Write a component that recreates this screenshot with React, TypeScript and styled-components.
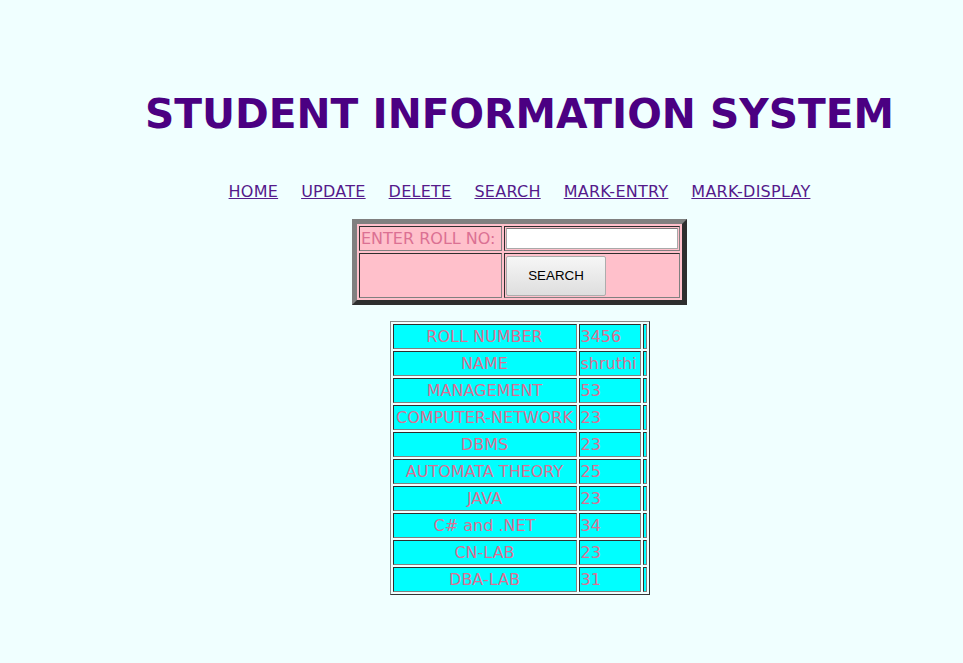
import React from "react";
import styled, { createGlobalStyle } from "styled-components";

const Global = createGlobalStyle`
  html, body { margin: 0; padding: 0; background: #f0ffff; }
  body { font-family: "DejaVu Sans", Verdana, sans-serif; }
`;

const Page = styled.div`
  padding: 91px 8px 40px 84px;
  display: flex;
  flex-direction: column;
  align-items: center;
`;

const Title = styled.h1`
  margin: 0;
  font-family: "DejaVu Sans", Verdana, sans-serif;
  font-weight: bold;
  font-size: 40.7px;
  line-height: 46px;
  color: #4b0082;
  text-align: center;
`;

const Nav = styled.nav`
  margin-top: 45px;
  display: flex;
  gap: 23px;
  font-size: 16px;
  line-height: 19px;
  letter-spacing: 0.25px;
`;

const NavLink = styled.a`
  color: #551a8b;
  text-decoration: underline;
`;

const FormTable = styled.table`
  margin-top: 18px;
  background: #ffc0cb;
  border-collapse: separate;
  border-spacing: 2px;
  border-style: solid;
  border-width: 5px;
  border-color: #808080 #2e2e2e #2e2e2e #808080;
`;

const DataTable = styled.table`
  margin-top: 16px;
  border-collapse: separate;
  border-spacing: 2px;
  border-style: solid;
  border-width: 1px;
  border-color: #8a8a8a #333 #333 #8a8a8a;
`;

const Cell = styled.td<{ $align?: string; $h?: number; $w?: number }>`
  border-style: solid;
  border-width: 1px;
  border-color: #2e2e2e #808080 #808080 #2e2e2e;
  padding: 1px;
  font-size: 16px;
  line-height: 21px;
  color: #db7093;
  text-align: ${(p) => p.$align || "left"};
  vertical-align: middle;
  white-space: nowrap;
  height: ${(p) => (p.$h ? `${p.$h}px` : "auto")};
  width: ${(p) => (p.$w !== undefined ? `${p.$w}px` : "auto")};
`;

const DataCell = styled(Cell)`
  background: #00ffff;
`;

const RollInput = styled.input`
  box-sizing: border-box;
  display: block;
  width: 172px;
  height: 21px;
  margin: 0;
  padding: 1px 2px;
  background: #fff;
  border: 1px solid #a9a9a9;
  border-top-color: #7a7a7a;
  font-size: 13px;
`;

const SearchButton = styled.button`
  box-sizing: border-box;
  display: block;
  width: 100px;
  height: 40px;
  margin: 0;
  background: linear-gradient(#f6f6f6, #dedede);
  border: 1px solid #adadad;
  border-radius: 2px;
  font-family: "Liberation Sans", Arial, sans-serif;
  font-size: 13.33px;
  color: #000;
`;

const rows: [string, string][] = [
  ["ROLL NUMBER", "3456"],
  ["NAME", "shruthi"],
  ["MANAGEMENT", "53"],
  ["COMPUTER-NETWORK", "23"],
  ["DBMS", "23"],
  ["AUTOMATA THEORY", "25"],
  ["JAVA", "23"],
  ["C# and .NET", "34"],
  ["CN-LAB", "23"],
  ["DBA-LAB", "31"],
];

const links = ["HOME", "UPDATE", "DELETE", "SEARCH", "MARK-ENTRY", "MARK-DISPLAY"];

export default function App() {
  return (
    <>
      <Global />
      <Page>
        <Title>STUDENT INFORMATION SYSTEM</Title>
        <Nav>
          {links.map((l) => (
            <NavLink key={l} href="#">
              {l}
            </NavLink>
          ))}
        </Nav>
        <FormTable>
          <tbody>
            <tr>
              <Cell $w={139}>ENTER ROLL NO:</Cell>
              <Cell $w={172}>
                <RollInput type="text" />
              </Cell>
            </tr>
            <tr>
              <Cell $h={41}></Cell>
              <Cell $h={41}>
                <SearchButton>SEARCH</SearchButton>
              </Cell>
            </tr>
          </tbody>
        </FormTable>
        <DataTable>
          <tbody>
            {rows.map(([k, v], i) => (
              <tr key={k}>
                <DataCell $align="center" $w={i === 0 ? 180 : undefined}>
                  {k}
                </DataCell>
                <DataCell $w={i === 0 ? 58 : undefined}>{v}</DataCell>
                <DataCell $w={i === 0 ? 0 : undefined}></DataCell>
              </tr>
            ))}
          </tbody>
        </DataTable>
      </Page>
    </>
  );
}
